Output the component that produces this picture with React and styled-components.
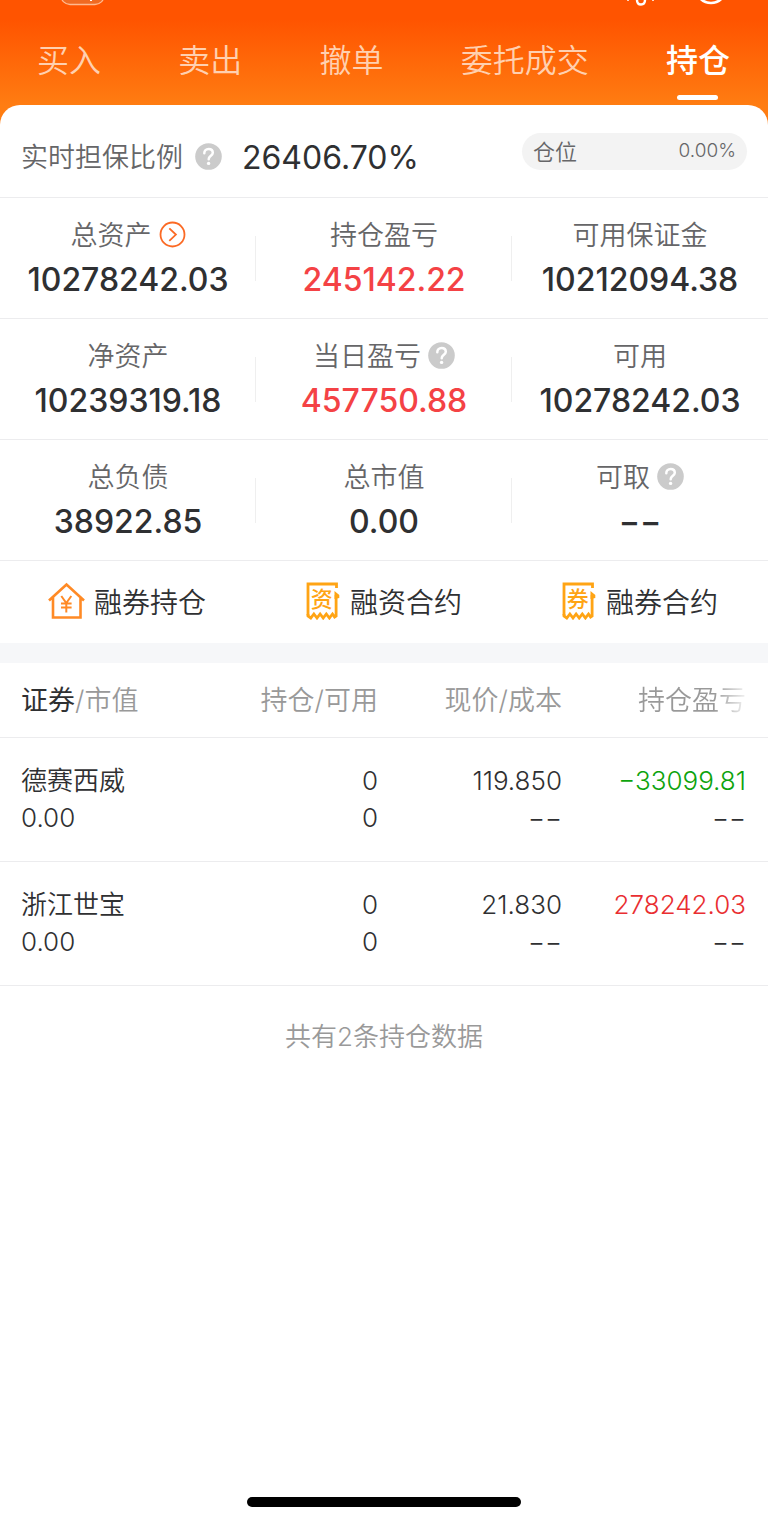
import React from "react";
import styled, { createGlobalStyle } from "styled-components";

const GlobalStyle = createGlobalStyle`
  * {
    box-sizing: border-box;
  }
  body {
    margin: 0;
    background: #fff;
    color: #2f3032;
    font-family: Inter, "Noto Sans CJK SC", sans-serif;
  }
  button {
    font: inherit;
    color: inherit;
    background: none;
    border: 0;
    padding: 0;
    cursor: pointer;
  }
`;

const Page = styled.div`
  min-height: 100vh;
  display: flex;
  flex-direction: column;
`;
const Header = styled.header`
  background: linear-gradient(#ff5400 20px, #ff7d12 106px);
  padding-bottom: 20px;
`;
const TopBar = styled.div`
  height: 8px;
  padding: 0 40px 0 60px;
  display: flex;
  justify-content: space-between;
  align-items: flex-start;
  svg {
    display: block;
  }
`;
const Tabs = styled.nav`
  height: 97px;
  padding: 0 38px 0 37px;
  display: flex;
  justify-content: space-between;
`;
const Tab = styled.a`
  display: flex;
  flex-direction: column;
  align-items: center;
  justify-content: space-between;
  padding: 29px 0 5px;
  font-size: 32px;
  line-height: 48px;
  font-weight: ${(props) => (props.$active ? 500 : 350)};
  color: ${(props) => (props.$active ? "#fff" : "#ffd0b0")};
  text-decoration: none;
  &::after {
    content: "";
    width: 41px;
    height: 5px;
    border-radius: 3px;
    background: ${(props) => (props.$active ? "#fff" : "transparent")};
  }
`;
const Sheet = styled.main`
  margin-top: -20px;
  border-radius: 20px 20px 0 0;
  background: #fff;
  flex: 1;
  display: flex;
  flex-direction: column;
`;
const RatioRow = styled.section`
  height: 93px;
  padding: 14px 21px 0;
  display: flex;
  align-items: center;
  border-bottom: 1px solid #ececee;
`;
const Label = styled.span`
  display: flex;
  align-items: center;
  gap: ${(props) => props.$gap || 7}px;
  font-size: 27px;
  line-height: 36px;
  font-weight: 350;
  color: #666668;
`;
const Ratio = styled.span`
  flex: 1;
  margin-left: 20px;
  font-size: 32px;
  line-height: 40px;
`;
const Position = styled.div`
  width: 225px;
  height: 37px;
  margin-bottom: 13px;
  padding: 0 11px 3px;
  border-radius: 19px;
  background: #f3f3f3;
  display: flex;
  align-items: center;
  justify-content: space-between;
  font-size: 22px;
  font-weight: 350;
  color: #666668;
`;
const PositionValue = styled.span`
  font-size: 19px;
`;
const Stats = styled.section`
  display: grid;
  grid-template-columns: repeat(3, 1fr);
`;
const Stat = styled.div`
  height: 121px;
  padding-top: 20px;
  display: flex;
  flex-direction: column;
  align-items: center;
  gap: 4px;
  border-bottom: 1px solid #ececee;
  background: ${(props) =>
    props.$divided ? "linear-gradient(#efefef, #efefef) right 38px / 1px 45px no-repeat" : "none"};
`;
const StatValue = styled.span`
  font-size: 32px;
  line-height: 44px;
  font-weight: 500;
  color: ${(props) => (props.$up ? "#f44245" : "#2f3032")};
`;
const HelpButton = styled.button`
  width: 27px;
  height: 27px;
  margin-bottom: 4px;
  svg {
    display: block;
  }
`;
const Actions = styled.section`
  display: grid;
  grid-template-columns: repeat(3, 1fr);
  height: 82px;
`;
const Action = styled.button`
  display: flex;
  align-items: center;
  justify-content: center;
  gap: 9px;
  padding: 0 2px 2px 0;
  font-size: 28px;
  font-weight: 350;
`;
const Band = styled.div`
  height: 20px;
  background: #f6f7f9;
`;
const Holdings = styled.table`
  width: 100%;
  border-collapse: collapse;
  table-layout: fixed;
`;
const Th = styled.th`
  height: 74px;
  padding: 2px 0 0;
  padding-left: ${(props) => (props.$first ? 21 : 0)}px;
  padding-right: ${(props) => (props.$last ? 22 : 0)}px;
  width: ${(props) => props.$width};
  text-align: ${(props) => (props.$first ? "left" : "right")};
  font-size: 27px;
  line-height: 37px;
  font-weight: 350;
  color: #999;
  border-bottom: 1px solid #ececee;
  b {
    font-weight: 400;
    color: #2f3032;
  }
`;
const FadeText = styled.span`
  background: linear-gradient(90deg, #999 70%, #f2f2f2);
  background-clip: text;
  color: transparent;
`;
const Td = styled.td`
  height: 124px;
  padding: 0 0 1px;
  padding-left: ${(props) => (props.$first ? 21 : 0)}px;
  padding-right: ${(props) => (props.$last ? 22 : 0)}px;
  text-align: ${(props) => (props.$first ? "left" : "right")};
  border-bottom: 1px solid #ececee;
`;
const Line = styled.div`
  font-size: 26px;
  line-height: 37px;
  font-weight: 350;
  color: ${(props) => props.$color || "#2f3032"};
`;
const Summary = styled.p`
  margin: 32px 0;
  text-align: center;
  font-size: 26px;
  line-height: 37px;
  font-weight: 350;
  color: #999;
`;
const HomeBar = styled.div`
  width: 274px;
  height: 10px;
  margin: auto auto 15px;
  border-radius: 5px;
  background: #000;
`;

function Help() {
  return (
    <HelpButton aria-label="help">
      <svg width="27" height="27" viewBox="0 0 27 27" fill="none">
        <circle cx="13.5" cy="13.5" r="13.3" fill="#cbcbcb" />
        <path d="M9.3 10.2c0-2.5 1.8-4.2 4.3-4.2s4.2 1.6 4.2 3.8c0 2.9-4.1 3.2-4.1 6.4" stroke="#fff" strokeWidth="2.5" strokeLinecap="round" />
        <circle cx="13.6" cy="20.4" r="1.7" fill="#fff" />
      </svg>
    </HelpButton>
  );
}

function More() {
  return (
    <HelpButton aria-label="details">
      <svg width="27" height="27" viewBox="0 0 27 27" fill="none" stroke="#fb6a25" strokeWidth="1.8">
        <circle cx="13.5" cy="13.5" r="12" />
        <path d="M10.3 7.3l6.6 6.3-6.6 6.3" />
      </svg>
    </HelpButton>
  );
}

function HouseIcon() {
  return (
    <svg width="37" height="38" viewBox="0 0 37 38" fill="none" stroke="#ff8a25" strokeWidth="2.6">
      <path d="M1 18.5L18.5 2.5 36 18.5M5 15.5v20h27.5v-20" />
      <path d="M13.3 14l5 7 5-7M18.3 21v9.5M13 21.5h10.6M13 25.5h10.6" strokeWidth="2" />
    </svg>
  );
}

const ReceiptText = styled.text`
  font-family: "Noto Sans CJK SC", sans-serif;
  font-size: 22px;
  font-weight: 500;
`;

function ReceiptIcon({ char }) {
  return (
    <svg width="37" height="38" viewBox="0 0 37 38" fill="#ffa414">
      <path
        d="M32.5 6V2H4v31.5"
        fill="none"
        stroke="#ffa414"
        strokeWidth="2.8"
      />
      <path
        d="M4 32v2l2.8 2 3.1-4 3.1 4 3.1-4 3.1 4 3.1-4 3.1 4 3.1-4 2.1 3 1.5-1V13"
        fill="none"
        stroke="#ffa414"
        strokeWidth="2.8"
      />
      <path d="M30.5 9l4.8 4v3l-4.8 1z" />
      <ReceiptText x="17.8" y="25" textAnchor="middle">
        {char}
      </ReceiptText>
    </svg>
  );
}

const tabs = ["买入", "卖出", "撤单", "委托成交", "持仓"];
const stats = [
  { label: "总资产", value: "10278242.03", icon: <More /> },
  { label: "持仓盈亏", value: "245142.22", up: true },
  { label: "可用保证金", value: "10212094.38" },
  { label: "净资产", value: "10239319.18" },
  { label: "当日盈亏", value: "457750.88", up: true, icon: <Help /> },
  { label: "可用", value: "10278242.03" },
  { label: "总负债", value: "38922.85" },
  { label: "总市值", value: "0.00" },
  { label: "可取", value: "−−", icon: <Help /> },
];
const actions = [
  { label: "融券持仓", icon: <HouseIcon /> },
  { label: "融资合约", icon: <ReceiptIcon char="资" /> },
  { label: "融券合约", icon: <ReceiptIcon char="券" /> },
];
const holdings = [
  { name: "德赛西威", price: "119.850", profit: "−33099.81", color: "#0da30d" },
  { name: "浙江世宝", price: "21.830", profit: "278242.03", color: "#e92e31" },
];

export default function App() {
  return (
    <>
      <GlobalStyle />
      <Page>
        <Header>
          <TopBar>
            <svg width="46" height="6" viewBox="0 0 46 6">
              <rect x="1" y="-20" width="43" height="24.5" rx="9" fill="#f06a22" stroke="#ffb98f" strokeWidth="1.3" />
              <path d="M31 0v1" stroke="#fff" strokeWidth="2" />
            </svg>
            <svg width="102" height="8" viewBox="0 0 102 8" fill="none" stroke="#fff">
              <path d="M11 0q0 4.5 4 4.5t4-4.5" strokeWidth="2.4" />
              <path d="M1 0h2M26 0h2" strokeWidth="1.5" />
              <circle cx="85" cy="-12" r="15" strokeWidth="2.6" />
            </svg>
          </TopBar>
          <Tabs>
            {tabs.map((tab) => (
              <Tab key={tab} href="#" $active={tab === "持仓"}>
                {tab}
              </Tab>
            ))}
          </Tabs>
        </Header>
        <Sheet>
          <RatioRow>
            <Label $gap={12}>
              实时担保比例
              <Help />
            </Label>
            <Ratio>26406.70%</Ratio>
            <Position>
              仓位
              <PositionValue>0.00%</PositionValue>
            </Position>
          </RatioRow>
          <Stats>
            {stats.map((stat, i) => (
              <Stat key={stat.label} $divided={i % 3 !== 2}>
                <Label>
                  {stat.label}
                  {stat.icon}
                </Label>
                <StatValue $up={stat.up}>{stat.value}</StatValue>
              </Stat>
            ))}
          </Stats>
          <Actions>
            {actions.map((action) => (
              <Action key={action.label}>
                {action.icon}
                {action.label}
              </Action>
            ))}
          </Actions>
          <Band />
          <Holdings>
            <thead>
              <tr>
                <Th $first $width="28%"><b>证券</b>/市值</Th>
                <Th>持仓/可用</Th>
                <Th $width="184px">现价/成本</Th>
                <Th $last $width="206px"><FadeText>持仓盈亏</FadeText></Th>
              </tr>
            </thead>
            <tbody>
              {holdings.map((row) => (
                <tr key={row.name}>
                  <Td $first>
                    <Line>{row.name}</Line>
                    <Line>0.00</Line>
                  </Td>
                  <Td>
                    <Line>0</Line>
                    <Line>0</Line>
                  </Td>
                  <Td>
                    <Line>{row.price}</Line>
                    <Line>−−</Line>
                  </Td>
                  <Td $last>
                    <Line $color={row.color}>{row.profit}</Line>
                    <Line>−−</Line>
                  </Td>
                </tr>
              ))}
            </tbody>
          </Holdings>
          <Summary>共有2条持仓数据</Summary>
          <HomeBar />
        </Sheet>
      </Page>
    </>
  );
}
